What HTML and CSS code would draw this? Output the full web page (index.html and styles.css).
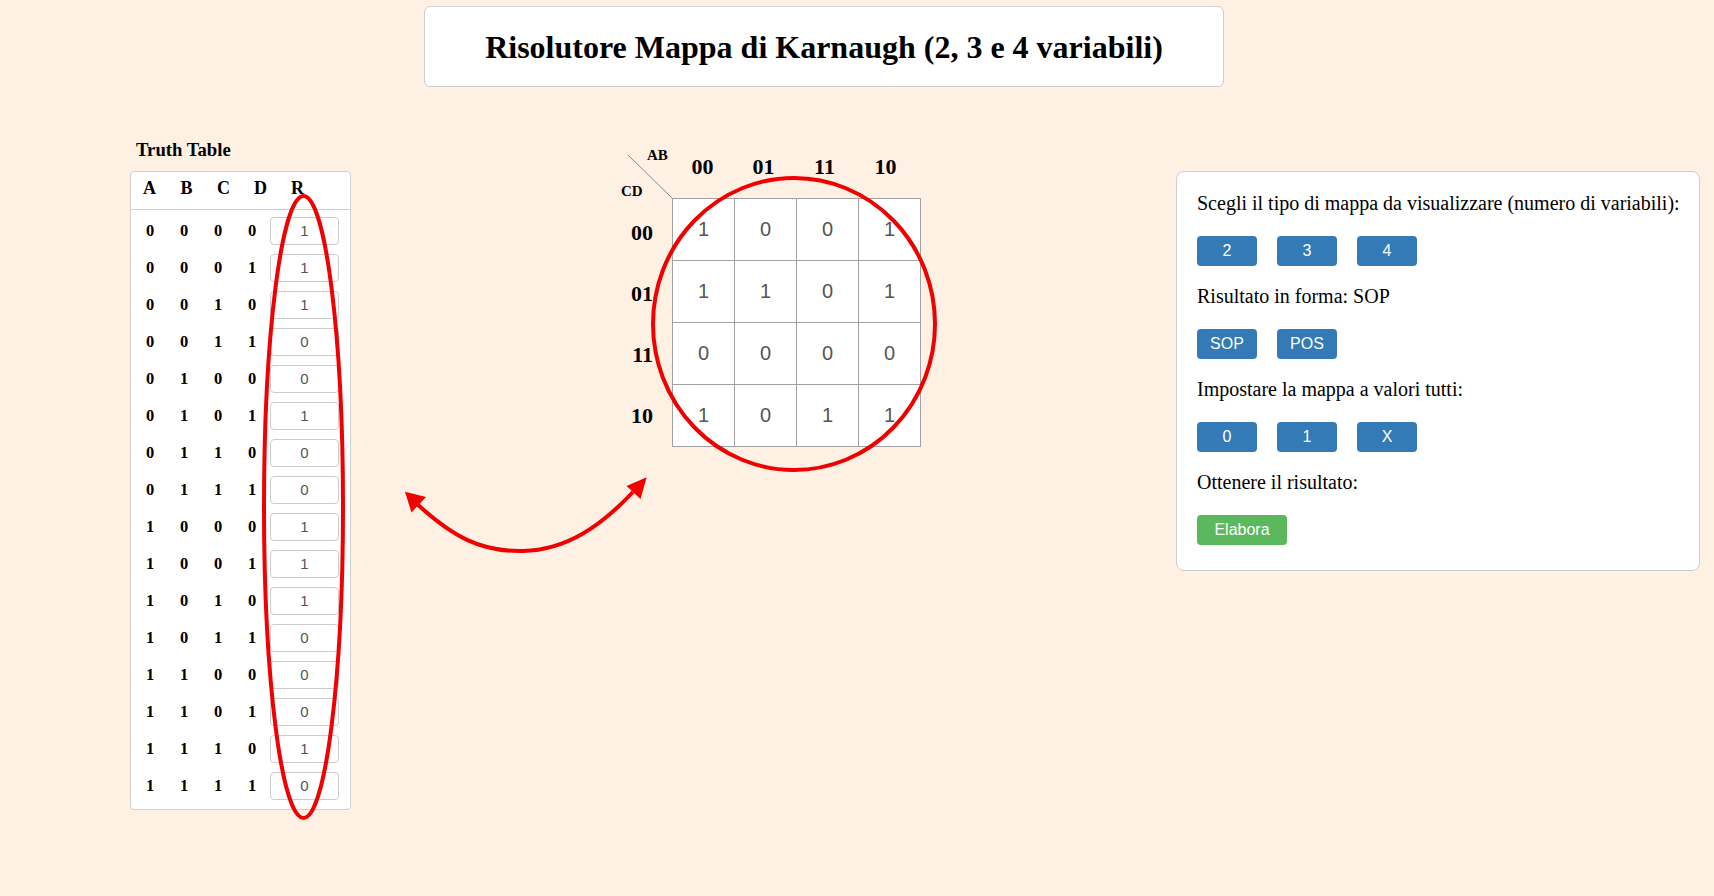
FILE: index.html
```html
<!DOCTYPE html>
<html lang="it">
<head>
<meta charset="utf-8">
<title>Risolutore Mappa di Karnaugh</title>
<link rel="stylesheet" href="styles.css">
</head>
<body>
<header class="title-box"><h1 class="title">Risolutore Mappa di Karnaugh (2, 3 e 4 variabili)</h1></header>
<main class="main">
  <section class="tt">
    <h3 class="tt-title">Truth Table</h3>
    <div class="tt-box">
      <div class="tt-head"><span>A</span><span>B</span><span>C</span><span>D</span><span>R</span></div>
      <div class="tt-body">
        <div class="tt-row"><span>0</span><span>0</span><span>0</span><span>0</span><input class="tt-input" value="1"></div>
        <div class="tt-row"><span>0</span><span>0</span><span>0</span><span>1</span><input class="tt-input" value="1"></div>
        <div class="tt-row"><span>0</span><span>0</span><span>1</span><span>0</span><input class="tt-input" value="1"></div>
        <div class="tt-row"><span>0</span><span>0</span><span>1</span><span>1</span><input class="tt-input" value="0"></div>
        <div class="tt-row"><span>0</span><span>1</span><span>0</span><span>0</span><input class="tt-input" value="0"></div>
        <div class="tt-row"><span>0</span><span>1</span><span>0</span><span>1</span><input class="tt-input" value="1"></div>
        <div class="tt-row"><span>0</span><span>1</span><span>1</span><span>0</span><input class="tt-input" value="0"></div>
        <div class="tt-row"><span>0</span><span>1</span><span>1</span><span>1</span><input class="tt-input" value="0"></div>
        <div class="tt-row"><span>1</span><span>0</span><span>0</span><span>0</span><input class="tt-input" value="1"></div>
        <div class="tt-row"><span>1</span><span>0</span><span>0</span><span>1</span><input class="tt-input" value="1"></div>
        <div class="tt-row"><span>1</span><span>0</span><span>1</span><span>0</span><input class="tt-input" value="1"></div>
        <div class="tt-row"><span>1</span><span>0</span><span>1</span><span>1</span><input class="tt-input" value="0"></div>
        <div class="tt-row"><span>1</span><span>1</span><span>0</span><span>0</span><input class="tt-input" value="0"></div>
        <div class="tt-row"><span>1</span><span>1</span><span>0</span><span>1</span><input class="tt-input" value="0"></div>
        <div class="tt-row"><span>1</span><span>1</span><span>1</span><span>0</span><input class="tt-input" value="1"></div>
        <div class="tt-row"><span>1</span><span>1</span><span>1</span><span>1</span><input class="tt-input" value="0"></div>
      </div>
    </div>
  </section>

  <section class="kmap">
    <div class="corner">
      <svg class="corner-line" width="57" height="59" viewBox="0 0 57 59"><line x1="13" y1="16" x2="57" y2="59" stroke="#8a8a8a" stroke-width="1"/></svg>
      <span class="lbl-ab">AB</span>
      <span class="lbl-cd">CD</span>
    </div>
    <div class="col-heads"><span>00</span><span>01</span><span>11</span><span>10</span></div>
    <div class="row-heads"><span>00</span><span>01</span><span>11</span><span>10</span></div>
    <div class="grid">
      <div class="cell">1</div><div class="cell">0</div><div class="cell">0</div><div class="cell">1</div>
      <div class="cell">1</div><div class="cell">1</div><div class="cell">0</div><div class="cell">1</div>
      <div class="cell">0</div><div class="cell">0</div><div class="cell">0</div><div class="cell">0</div>
      <div class="cell">1</div><div class="cell">0</div><div class="cell">1</div><div class="cell">1</div>
    </div>
  </section>

  <section class="panel">
    <p class="panel-text">Scegli il tipo di mappa da visualizzare (numero di variabili):</p>
    <div class="btn-row"><button class="btn">2</button><button class="btn">3</button><button class="btn">4</button></div>
    <p class="panel-text">Risultato in forma: SOP</p>
    <div class="btn-row"><button class="btn">SOP</button><button class="btn">POS</button></div>
    <p class="panel-text">Impostare la mappa a valori tutti:</p>
    <div class="btn-row"><button class="btn">0</button><button class="btn">1</button><button class="btn">X</button></div>
    <p class="panel-text">Ottenere il risultato:</p>
    <div class="btn-row last"><button class="btn btn-green">Elabora</button></div>
  </section>
</main>

<svg class="annot" width="1714" height="896" viewBox="0 0 1714 896">
  <ellipse cx="303.5" cy="507" rx="39.5" ry="311" fill="none" stroke="#f00000" stroke-width="4"/>
  <ellipse cx="794" cy="324" rx="141" ry="146" fill="none" stroke="#f00000" stroke-width="4"/>
  <path d="M417 504 C 452 536, 480 552, 523 551 C 566 550, 600 527, 633 492" fill="none" stroke="#f00000" stroke-width="4"/>
  <polygon points="405,491.7 426,497 411.5,512.5" fill="#f00000"/>
  <polygon points="646.7,477.3 626.5,486 640.5,499" fill="#f00000"/>
</svg>
</body>
</html>
```

FILE: styles.css
```css
* { box-sizing: border-box; }

html, body {
  margin: 0;
  padding: 0;
}

body {
  background: #fef1e4;
  font-family: "Liberation Serif", "Times New Roman", serif;
  color: #000;
  width: 1714px;
  height: 896px;
  position: relative;
  overflow: hidden;
}

.title-box {
  margin: 6px 0 0 424px;
  width: 800px;
  height: 81px;
  background: #fff;
  border: 1px solid #cfcfcf;
  border-radius: 6px;
  display: flex;
  align-items: center;
  justify-content: center;
}

.title {
  margin: 0;
  font-size: 32px;
  font-weight: bold;
  line-height: 36px;
}

.main {
  display: flex;
  align-items: flex-start;
  margin-top: 52px;
  padding-left: 130px;
}

/* Truth table */
.tt { width: 221px; }

.tt-title {
  margin: 0 0 10px 6px;
  font-size: 18.72px;
  line-height: 22px;
  font-weight: bold;
}

.tt-box {
  background: #fff;
  border: 1px solid #cfcfcf;
  border-radius: 4px;
}

.tt-head {
  display: flex;
  height: 38px;
  padding-bottom: 4px;
  border-bottom: 1px solid #cfcfcf;
  align-items: center;
  font-weight: bold;
  font-size: 18px;
}

.tt-head span {
  width: 37px;
  text-align: center;
}

.tt-body {
  padding: 2px 0 5px 2px;
}

.tt-row {
  display: flex;
  align-items: center;
  height: 37px;
  font-weight: bold;
  font-size: 16.5px;
}

.tt-row span {
  width: 34px;
  text-align: center;
}

.tt-input {
  margin-left: 1px;
  width: 69px;
  height: 28px;
  border: 1px solid #cccccc;
  border-radius: 4px;
  background: #fff;
  text-align: center;
  font-family: "Liberation Sans", Arial, sans-serif;
  font-size: 15px;
  color: #555;
  padding: 0;
}

/* K-map */
.kmap {
  margin-left: 264px;
  display: grid;
  grid-template-columns: 57px 249px;
  grid-template-rows: 59px 249px;
}

.corner {
  position: relative;
}

.corner-line {
  position: absolute;
  left: 0;
  top: 0;
}

.lbl-ab, .lbl-cd {
  position: absolute;
  font-weight: bold;
  font-size: 15px;
  line-height: 16px;
}

.lbl-ab { left: 32px; top: 8px; }
.lbl-cd { left: 6px; top: 44px; }

.col-heads {
  display: grid;
  grid-template-columns: repeat(4, 61px);
  align-items: end;
  padding-bottom: 19px;
}

.col-heads span, .row-heads span {
  font-weight: bold;
  font-size: 22px;
  line-height: 25px;
  text-align: center;
}

.row-heads {
  display: grid;
  grid-template-rows: repeat(4, 61px);
  align-content: start;
  padding-top: 1px;
  align-items: center;
}

.row-heads span {
  text-align: right;
  padding-right: 19px;
  padding-top: 5px;
}

.grid {
  display: grid;
  grid-template-columns: repeat(4, 61px);
  grid-template-rows: repeat(4, 61px);
  gap: 1px;
  padding: 1px;
  background: #a0a0a0;
}

.cell {
  background: #fff;
  display: flex;
  align-items: center;
  justify-content: center;
  font-family: "Liberation Sans", Arial, sans-serif;
  font-size: 20px;
  color: #555;
}

/* Panel */
.panel {
  margin-left: 255px;
  margin-top: 32px;
  width: 524px;
  background: #fff;
  border: 1px solid #cfcfcf;
  border-radius: 8px;
  padding: 20px 10px 6px 20px;
}

.panel-text {
  margin: 0 0 21px 0;
  font-size: 20px;
  line-height: 23px;
  white-space: nowrap;
}

.btn-row {
  display: flex;
  gap: 20px;
  margin-bottom: 19px;
}

.btn {
  width: 60px;
  height: 30px;
  border: none;
  border-radius: 4px;
  background: #337ab7;
  color: #fff;
  font-family: "Liberation Sans", Arial, sans-serif;
  font-size: 16px;
  padding: 0;
}

.btn-green {
  width: 90px;
  background: #5cb85c;
}

.annot {
  position: absolute;
  left: 0;
  top: 0;
  pointer-events: none;
}
```
